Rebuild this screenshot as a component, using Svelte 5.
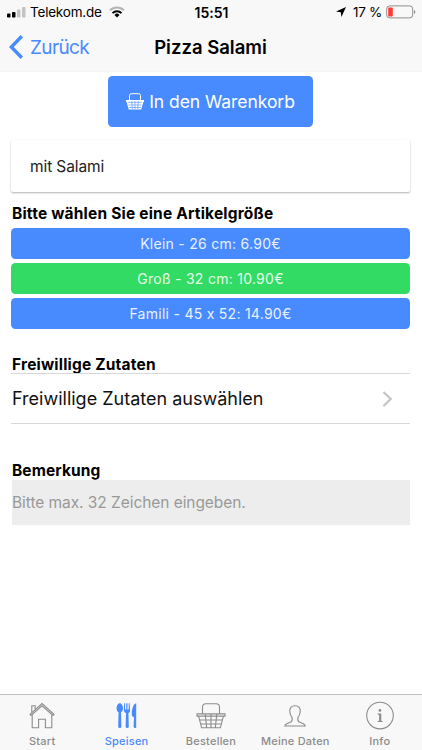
<script lang="ts">
	type Size = { id: string; label: string };

	const sizes: Size[] = [
		{ id: 'klein', label: 'Klein - 26 cm: 6.90€' },
		{ id: 'gross', label: 'Groß - 32 cm: 10.90€' },
		{ id: 'famili', label: 'Famili - 45 x 52: 14.90€' }
	];

	const tabs = [
		{ id: 'start', label: 'Start' },
		{ id: 'speisen', label: 'Speisen' },
		{ id: 'bestellen', label: 'Bestellen' },
		{ id: 'daten', label: 'Meine Daten' },
		{ id: 'info', label: 'Info' }
	];

	let selected = $state('gross');
	let active = $state('speisen');
	let note = $state('');
</script>

<div class="app">
	<header>
		<div class="status">
			<div class="carrier">
				<svg width="19" height="11" viewBox="0 0 19 11">
					<rect x="0" y="6.6" width="3.5" height="4" rx="0.8" />
					<rect x="5" y="5" width="3.5" height="5.6" rx="0.8" />
					<rect x="10" y="2.6" width="3.5" height="8" rx="0.8" fill="#c3c3c3" />
					<rect x="15" y="0" width="3.5" height="10.6" rx="0.8" fill="#c3c3c3" />
				</svg>
				<span class="name">Telekom.de</span>
				<svg class="wifi" width="16" height="12" viewBox="0 0 16 12" fill="none" stroke-width="2">
					<path d="M1 4.4a10 10 0 0 1 14 0" stroke="#b4b4b4" />
					<path d="M3.5 7.1a6.4 6.4 0 0 1 9 0" stroke="#000" />
					<path d="M8 11.4L5.5 8.9a3.5 3.5 0 0 1 5 0z" fill="#000" />
				</svg>
			</div>
			<span class="time">15:51</span>
			<div class="power">
				<svg width="10" height="10" viewBox="0 0 10 10"><path d="M10 0L5.4 10 4.8 5.2 0 4.6z" /></svg>
				<span class="percent">17 %</span>
				<svg class="battery" width="30" height="14" viewBox="0 0 30 14">
					<rect x="0.7" y="0.9" width="26" height="12" rx="3" fill="none" stroke="#8e8e8e" />
					<rect x="2.2" y="2.4" width="4.6" height="9" rx="0.8" fill="#ff3b30" />
					<path d="M28 5v4c1.8-.7 1.8-3.3 0-4z" fill="#8e8e8e" />
				</svg>
			</div>
		</div>
		<nav class="bar">
			<button class="back">
				<svg width="14" height="24" viewBox="0 0 14 24" fill="none" stroke="currentColor" stroke-width="3.4">
					<path d="M12.8 1.3L2.3 12l10.5 10.7" />
				</svg>
				<span>Zurück</span>
			</button>
			<h1>Pizza Salami</h1>
		</nav>
	</header>

	<main>
		<button class="cart">
			<svg width="18" height="17" viewBox="0 0 18 17">
				<path d="M3.5 7V2.6Q3.5.7 5.4.7h7.2q1.9 0 1.9 1.9V7" fill="none" stroke="#fff" stroke-width="1" />
				<path d="M0 7h18v2h-.7l-2 7.5H2.7L.7 9H0z" fill="#fff" />
				<path d="M2 9.4h14M2.4 12h13.2M3 14.5h12M5.7 8l.6 8M9 8v8M12.3 8l-.6 8" stroke="#488aff" stroke-width=".6" />
			</svg>
			<span>In den Warenkorb</span>
		</button>

		<div class="card">mit Salami</div>

		<h2 class="sizes-title">Bitte wählen Sie eine Artikelgröße</h2>
		<div class="sizes">
			{#each sizes as size (size.id)}
				<button class="size" class:selected={selected === size.id} onclick={() => (selected = size.id)}>
					{size.label}
				</button>
			{/each}
		</div>

		<h2 class="extras-title">Freiwillige Zutaten</h2>
		<button class="extras">
			<span>Freiwillige Zutaten auswählen</span>
			<svg width="11" height="16" viewBox="0 0 11 16" fill="none" stroke="#c4c4c8" stroke-width="2.2">
				<path d="M1.5 1L8.7 8l-7.2 7" />
			</svg>
		</button>

		<h2 class="note-title">Bemerkung</h2>
		<input class="note" maxlength="32" placeholder="Bitte max. 32 Zeichen eingeben." bind:value={note} />
	</main>

	<footer>
		{#each tabs as tab (tab.id)}
			<button class="tab {tab.id}" class:active={active === tab.id} onclick={() => (active = tab.id)}>
				<svg width="30" height="30" viewBox="0 0 30 30" fill="none" stroke="currentColor" stroke-width="1.1">
					{#if tab.id === 'start'}
						<path d="M3 14.4L15 3.5l12 10.9-1 1.1L15 5.8 4 15.5z" />
						<path d="M4.8 12.5V5.8h3.4v3.5M5.2 14.8v13h6.4v-8.6h6.8v8.6h6.4v-13" />
					{:else if tab.id === 'speisen'}
						<g fill="currentColor" stroke="none">
							<path d="M7.8 3.200c2 0 3.200 2.700 3.200 5.200 0 2-.9 3.300-2 3.900l.4 14.200a1.600 1.600 0 0 1-3.200 0l.4-14.200c-1.100-.6-2-1.900-2-3.900C4.600 5.900 5.800 3.200 7.800 3.200z" />
							<path d="M12.200 3.200h.9v6.400h1.200V3.200h1.200v6.400h1.200V3.200h.9l.5 7c0 1.700-.8 2.500-1.700 2.900l.4 13.400a1.600 1.600 0 0 1-3.200 0L14 13.100c-1-.4-2.100-1.200-2.100-2.900z" />
							<path d="M24.200 3.200v24.700c-1.700.4-2.700-.4-2.600-1.700l.4-8.700-2.100-1.800C19.500 10.200 20.800 4.200 24.200 3.200z" />
						</g>
					{:else if tab.id === 'bestellen'}
						<path d="M6.500 13.900V7.200q0-3.400 3.400-3.400h10.200q3.400 0 3.400 3.400v6.700" />
						<path d="M1 13.900h28v2.200H1zM2.600 16.100l3 11.700h18.800l3-11.700M3.600 20h22.800M4.600 24h20.800M9.200 13.900l1.500 13.900M15 13.900v13.900M20.800 13.900l-1.500 13.900" />
					{:else if tab.id === 'daten'}
						<path d="M15 5.700c3.700 0 5.600 2.500 5.200 6-.3 3-1 4.200-2.200 5.600-.5 2.600-.2 4 1.200 4.700l3.600 1.400c1.700.7 2.400 1.300 2.400 2.600H4.800c0-1.300.7-1.900 2.400-2.600l3.600-1.400c1.400-.7 1.700-2.100 1.200-4.700-1.200-1.400-1.900-2.600-2.200-5.600-.4-3.500 1.500-6 5.200-6z" />
					{:else}
						<circle cx="15" cy="15.600" r="13.300" />
						<circle cx="14.900" cy="10.400" r="1.400" fill="currentColor" stroke="none" />
						<path d="M12.600 13.600h3.700v7.200l1.400.5v.7h-5v-.7l1.400-.5V15l-1.500-.5z" fill="currentColor" stroke="none" />
					{/if}
				</svg>
				<span>{tab.label}</span>
			</button>
		{/each}
	</footer>
</div>

<style>
	:global(body) {
		margin: 0;
		background: #fff;
	}
	.app {
		display: flex;
		flex-direction: column;
		height: 750px;
		width: 422px;
		overflow: hidden;
		background: #fff;
		color: #000;
		font-family: Inter, 'Liberation Sans', sans-serif;
		/* keeps "45 x 52" a plain x */
		font-feature-settings: 'calt' 0;
	}
	button {
		border: 0;
		padding: 0;
		margin: 0;
		background: none;
		color: inherit;
		font: inherit;
		font-feature-settings: inherit;
		white-space: nowrap;
	}
	svg {
		display: block;
		flex: none;
	}
	h1,
	h2 {
		margin: 0;
	}

	header {
		flex: none;
		box-sizing: border-box;
		height: 72px;
		background: #f8f8f8;
		border-bottom: 1px solid #f5f5f5;
	}
	.status {
		display: grid;
		grid-template-columns: 1fr auto 1fr;
		align-items: center;
		height: 24px;
		padding: 0 6px 0 7px;
		font-size: 13.5px;
	}
	.carrier,
	.power {
		display: flex;
		align-items: center;
	}
	.name {
		margin-left: 4px;
		letter-spacing: -0.2px;
	}
	.wifi {
		margin-left: 7px;
	}
	.time {
		font-size: 14px;
		font-weight: 600;
	}
	.power {
		justify-content: flex-end;
	}
	.percent {
		margin: 0 4px 0 7px;
		letter-spacing: -0.3px;
	}
	.bar {
		display: grid;
		grid-template-columns: 1fr auto 1fr;
		align-items: center;
		height: 46px;
		padding: 0 10px 0 9px;
	}
	.back {
		display: flex;
		align-items: center;
		gap: 7px;
		color: #488aff;
		font-size: 19px;
		letter-spacing: -0.65px;
	}
	h1 {
		font-size: 18.5px;
		font-weight: 600;
	}

	main {
		flex: 1;
		display: flex;
		flex-direction: column;
		padding: 4px 12px 0 11px;
	}
	.cart {
		align-self: center;
		display: flex;
		align-items: center;
		justify-content: center;
		gap: 5px;
		width: 205px;
		height: 51px;
		border-radius: 4.5px;
		background: #488aff;
		color: #fff;
		font-size: 17.5px;
		letter-spacing: -0.05px;
	}
	.card {
		flex: none;
		display: flex;
		align-items: center;
		height: 52px;
		margin-top: 13px;
		padding-left: 19px;
		border-radius: 2px;
		box-shadow: 0 1px 2px rgba(0, 0, 0, 0.3);
		font-size: 15.5px;
		letter-spacing: -0.1px;
		color: #222;
	}
	h2 {
		padding-left: 1px;
		font-size: 15.5px;
		font-weight: 700;
		line-height: 20px;
		letter-spacing: 0.2px;
		white-space: nowrap;
	}
	.sizes-title {
		margin-top: 12px;
	}
	.sizes {
		display: grid;
		gap: 4px;
		margin-top: 4px;
	}
	.size {
		height: 31px;
		border-radius: 4.5px;
		background: #488aff;
		color: #e9f1ff;
		font-size: 14px;
		letter-spacing: 0.27px;
	}
	.size.selected {
		background: #32db64;
		color: #e4fbea;
	}
	.extras-title {
		margin-top: 26px;
	}
	.extras {
		display: flex;
		align-items: center;
		justify-content: space-between;
		box-sizing: border-box;
		height: 51px;
		margin-top: -2px;
		padding: 0 17px 0 1px;
		border-top: 1px solid #d8d8da;
		border-bottom: 1px solid #d8d8da;
		font-size: 18px;
		color: #111;
	}
	.note-title {
		margin-top: 37px;
		letter-spacing: 0.1px;
	}
	.note {
		box-sizing: border-box;
		margin: -1px 0 0 1px;
		height: 45px;
		padding: 0;
		border: 0;
		outline: 0;
		border-radius: 0;
		background: #ededed;
		color: #222;
		font: 15.5px Inter, 'Liberation Sans', sans-serif;
		letter-spacing: -0.06px;
	}
	.note::placeholder {
		color: #999;
		opacity: 1;
	}

	footer {
		flex: none;
		display: grid;
		grid-template-columns: repeat(5, 1fr);
		box-sizing: border-box;
		height: 56px;
		border-top: 1px solid #c0c0c0;
		background: #f8f8f8;
	}
	.tab {
		display: flex;
		flex-direction: column;
		align-items: center;
		padding-top: 5px;
		color: #8c8c8c;
		font-size: 11px;
		font-weight: 500;
	}
	.tab span {
		margin-top: 4px;
		line-height: 14px;
		letter-spacing: 0.22px;
	}
	.tab.active {
		color: #488aff;
	}
</style>
